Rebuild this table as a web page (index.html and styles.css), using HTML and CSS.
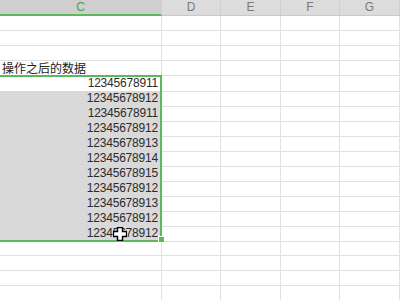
FILE: index.html
```html
<!DOCTYPE html>
<html lang="zh-CN">
<head>
    <meta charset="UTF-8">
    <title>Sheet1</title>
    <link rel="stylesheet" href="styles.css">
</head>
<body>
<div class="sheet">

    <!-- Column headers -->
    <div class="col-headers">
        <div class="col-head active">C</div>
        <div class="col-head">D</div>
        <div class="col-head">E</div>
        <div class="col-head">F</div>
        <div class="col-head">G</div>
    </div>

    <div class="grid">
        <div class="row"><div class="cell"></div><div class="cell"></div><div class="cell"></div><div class="cell"></div><div class="cell"></div></div>
        <div class="row"><div class="cell"></div><div class="cell"></div><div class="cell"></div><div class="cell"></div><div class="cell"></div></div>
        <div class="row"><div class="cell"></div><div class="cell"></div><div class="cell"></div><div class="cell"></div><div class="cell"></div></div>
        <div class="row"><div class="cell label">操作之后的数据</div><div class="cell"></div><div class="cell"></div><div class="cell"></div><div class="cell"></div></div>

        <!-- Selected range C5:C15 -->
        <div class="range">
            <div class="row"><div class="cell num current">12345678911</div><div class="cell"></div><div class="cell"></div><div class="cell"></div><div class="cell"></div></div>
            <div class="row"><div class="cell num sel">12345678912</div><div class="cell"></div><div class="cell"></div><div class="cell"></div><div class="cell"></div></div>
            <div class="row"><div class="cell num sel">12345678911</div><div class="cell"></div><div class="cell"></div><div class="cell"></div><div class="cell"></div></div>
            <div class="row"><div class="cell num sel">12345678912</div><div class="cell"></div><div class="cell"></div><div class="cell"></div><div class="cell"></div></div>
            <div class="row"><div class="cell num sel">12345678913</div><div class="cell"></div><div class="cell"></div><div class="cell"></div><div class="cell"></div></div>
            <div class="row"><div class="cell num sel">12345678914</div><div class="cell"></div><div class="cell"></div><div class="cell"></div><div class="cell"></div></div>
            <div class="row"><div class="cell num sel">12345678915</div><div class="cell"></div><div class="cell"></div><div class="cell"></div><div class="cell"></div></div>
            <div class="row"><div class="cell num sel">12345678912</div><div class="cell"></div><div class="cell"></div><div class="cell"></div><div class="cell"></div></div>
            <div class="row"><div class="cell num sel">12345678913</div><div class="cell"></div><div class="cell"></div><div class="cell"></div><div class="cell"></div></div>
            <div class="row"><div class="cell num sel">12345678912</div><div class="cell"></div><div class="cell"></div><div class="cell"></div><div class="cell"></div></div>
            <div class="row"><div class="cell num sel">12345678912</div><div class="cell"></div><div class="cell"></div><div class="cell"></div><div class="cell"></div></div>

            <div class="range-border"></div>
            <div class="fill-handle"></div>

            <!-- mouse pointer (white cross) -->
            <svg class="pointer" width="14" height="14" viewBox="0 0 14 14">
                <path d="M4.5 0.5 H9.5 V4.5 H13.5 V9.5 H9.5 V13.5 H4.5 V9.5 H0.5 V4.5 H4.5 Z" fill="#fff" stroke="#000" stroke-width="1.4"/>
            </svg>
        </div>

        <div class="row"><div class="cell"></div><div class="cell"></div><div class="cell"></div><div class="cell"></div><div class="cell"></div></div>
        <div class="row"><div class="cell"></div><div class="cell"></div><div class="cell"></div><div class="cell"></div><div class="cell"></div></div>
        <div class="row"><div class="cell"></div><div class="cell"></div><div class="cell"></div><div class="cell"></div><div class="cell"></div></div>
        <div class="row"><div class="cell"></div><div class="cell"></div><div class="cell"></div><div class="cell"></div><div class="cell"></div></div>
    </div>
</div>
</body>
</html>
```

FILE: styles.css
```css
body {
    margin: 0;
    background-color: #fff;
    font-family: 'Liberation Sans', Arial, 'Noto Sans CJK SC', sans-serif;
    overflow: hidden;
}

.sheet {
    width: 400px;
    height: 300px;
    overflow: hidden;
}

.col-headers,
.row {
    display: grid;
    grid-template-columns: 162px 59px 60px 59px 60px;
}

.col-headers {
    height: 16px;
    background-color: #dcdcdc;
}

.col-head {
    border-right: 1px solid #cfcfcf;
    border-bottom: 1px solid #c8c8c8;
    color: #7a7a7a;
    font-size: 12px;
    line-height: 15px;
    text-align: center;
}

.col-head.active {
    background-color: #cfcfcf;
    color: #4f9e4f;
    border-bottom: 2px solid #5cb85c;
    line-height: 14px;
}

.row {
    height: 15px;
}

.cell {
    border-right: 1px solid #e0e0e0;
    border-bottom: 1px solid #e0e0e0;
    font-size: 12px;
    letter-spacing: -0.2px;
    line-height: 15px;
    color: #2b2b2b;
    white-space: nowrap;
    overflow: visible;
}

.label {
    font-family: 'Noto Sans CJK SC', sans-serif;
    font-size: 12px;
    letter-spacing: 0;
    line-height: 14px;
    padding-left: 2px;
    color: #222;
}

.num {
    text-align: right;
    padding-right: 3px;
}

.sel {
    background-color: #d9d9d9;
    border-bottom-color: #e9e9e9;
}

.range {
    position: relative;
}

.range-border {
    position: absolute;
    left: -4px;
    top: -1px;
    width: 162px;
    height: 163px;
    border: 2px solid #5cb85c;
    pointer-events: none;
}

.fill-handle {
    position: absolute;
    left: 158px;
    top: 160px;
    width: 5px;
    height: 5px;
    background-color: #5cb85c;
    border: 1px solid #fff;
}

.pointer {
    position: absolute;
    left: 113px;
    top: 151px;
}
```
